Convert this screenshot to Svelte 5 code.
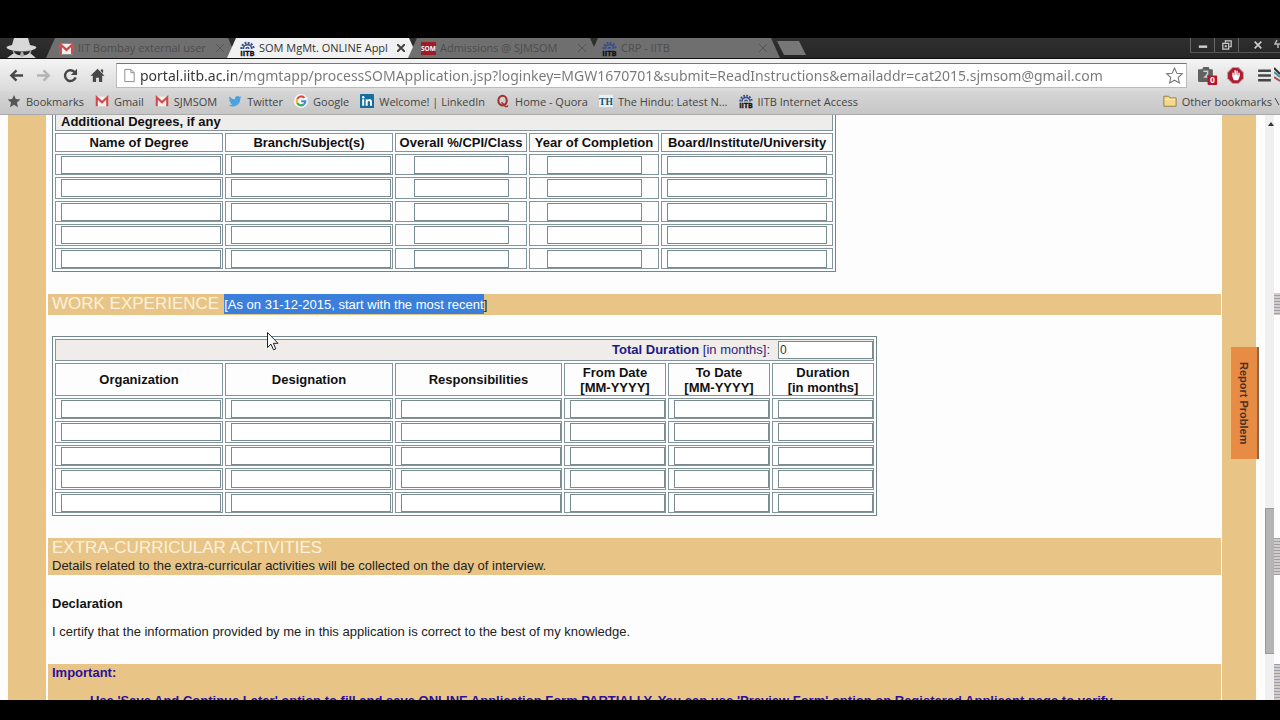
<script lang="ts">
  const tabs = [
    { title: 'IIT Bombay external user', icon: 'gmail', active: false },
    { title: 'SOM MgMt. ONLINE Appl', icon: 'iitb', active: true },
    { title: 'Admissions @ SJMSOM', icon: 'som', active: false },
    { title: 'CRP - IITB', icon: 'iitb', active: false },
  ];

  const bookmarks = [
    { label: 'Bookmarks', icon: 'star' },
    { label: 'Gmail', icon: 'gmail' },
    { label: 'SJMSOM', icon: 'gmail' },
    { label: 'Twitter', icon: 'twitter' },
    { label: 'Google', icon: 'google' },
    { label: 'Welcome! | LinkedIn', icon: 'linkedin' },
    { label: 'Home - Quora', icon: 'quora' },
    { label: 'The Hindu: Latest N...', icon: 'hindu' },
    { label: 'IITB Internet Access', icon: 'iitb' },
  ];

  const degreeCols = ['Name of Degree', 'Branch/Subject(s)', 'Overall %/CPI/Class', 'Year of Completion', 'Board/Institute/University'];
  const workCols = [
    ['Organization'],
    ['Designation'],
    ['Responsibilities'],
    ['From Date', '[MM-YYYY]'],
    ['To Date', '[MM-YYYY]'],
    ['Duration', '[in months]'],
  ];
  const rows = [1, 2, 3, 4, 5];

  let url = $state('portal.iitb.ac.in/mgmtapp/processSOMApplication.jsp?loginkey=MGW1670701&submit=ReadInstructions&emailaddr=cat2015.sjmsom@gmail.com');
  let total = $state('0');
</script>

{#snippet icon(name: string)}
  <svg class="icon" viewBox="0 0 16 16" aria-hidden="true">
    {#if name === 'gmail'}
      <path d="M1 3h14v11H1z" fill="#f3eeee" />
      <path d="M2 14V4l6 5.500 6-5.500v10" fill="none" stroke="#cf4b4b" stroke-width="2.400" />
    {:else if name === 'iitb'}
      <path d="M3.500 8.500a4.500 4.500 0 0 1 9 0" fill="none" stroke="#35508f" stroke-width="1.800" />
      <path d="M1.500 8.500a6.500 6.500 0 0 1 13 0" fill="none" stroke="#35508f" stroke-width="2.400" stroke-dasharray="2 1.400" />
      <path d="M6.500 8.500a1.500 1.500 0 0 1 3 0" fill="none" stroke="#35508f" stroke-width="1.500" />
      <text x="8" y="16" text-anchor="middle" font-size="8" font-weight="bold" fill="#111" stroke="#111" stroke-width=".4">IITB</text>
    {:else if name === 'som'}
      <path d="M0 1h16v14H0z" fill="#9c1c28" />
      <text x="8" y="11" text-anchor="middle" font-size="7" font-weight="bold" fill="#fff">SOM</text>
    {:else if name === 'star'}
      <path d="M8 1l2.100 4.800 5.200.5-3.900 3.500 1.100 5.200L8 12.300 3.500 15l1.100-5.200L.7 6.300l5.200-.5z" fill="#555" />
    {:else if name === 'twitter'}
      <path d="M15.500 3.700c-.6.300-1.100.4-1.700.5.600-.4 1-1 1.200-1.700-.6.300-1.200.6-1.900.7a3 3 0 0 0-5.100 2.700A8.500 8.500 0 0 1 1.600 2.800a3 3 0 0 0 1 4c-.5 0-1-.2-1.400-.4 0 1.500 1 2.700 2.400 3-.4.100-.9.100-1.300 0 .4 1.200 1.500 2.100 2.800 2.100A6 6 0 0 1 .7 12.800 8.500 8.500 0 0 0 14 5.200c.6-.4 1.100-.9 1.500-1.500z" fill="#4ba3dd" />
    {:else if name === 'google'}
      <circle cx="8" cy="8" r="8" fill="#f8f8f8" />
      <g fill="none" stroke-width="2.400">
        <path d="M12 4.500A5 5 0 0 0 3.700 5.600" stroke="#dc4a3d" />
        <path d="M3.700 5.600a5 5 0 0 0 0 4.800" stroke="#edb72a" />
        <path d="M3.700 10.400a5 5 0 0 0 7.500 1.500" stroke="#3aa757" />
        <path d="M11.200 11.900A5 5 0 0 0 13 8.200H8.200" stroke="#4484e4" />
      </g>
    {:else if name === 'linkedin'}
      <rect width="16" height="16" rx="1" fill="#176d9c" />
      <path d="M2.500 6h2.300v7.500H2.500zM6.500 6h2.200v1c1.500-2 5-1.500 5 2v4.500h-2.300V9.500c0-2.300-2.600-2-2.600 0v4H6.500z" fill="#fff" />
      <circle cx="3.700" cy="3.700" r="1.400" fill="#fff" />
    {:else if name === 'quora'}
      <ellipse cx="7.500" cy="7.500" rx="4.800" ry="5.500" fill="none" stroke="#a5332d" stroke-width="2.400" />
      <path d="M6 10c2.500-.5 3 4.500 5.500 4.500 1.300 0 1.800-.7 2-1.500" fill="none" stroke="#a5332d" stroke-width="1.800" />
    {:else if name === 'hindu'}
      <path d="M0 1h16v14H0z" fill="#e8f0f4" />
      <text class="serif" x="8" y="12" text-anchor="middle" font-size="11" font-weight="bold" fill="#175070">TH</text>
    {:else if name === 'folder'}
      <path d="M1 14V2.500h5.500L8 4.500h7V14z" fill="#f2d98b" stroke="#8d7638" />
      <path d="M2 6h12" stroke="#fff2bd" />
    {:else if name === 'back' || name === 'forward'}
      <path
        d="M15 8H3M8 2.500L2.500 8 8 13.500"
        fill="none"
        stroke={name === 'back' ? '#484848' : '#b4b4b4'}
        stroke-width="2.600"
        transform={name === 'back' ? undefined : 'rotate(180 8 8)'}
      />
    {:else if name === 'reload'}
      <path d="M12.600 4.600A5.800 5.800 0 1 0 13.500 10" fill="none" stroke="#484848" stroke-width="2.600" />
      <path d="M15 .8v6.700H8.300z" fill="#484848" />
    {:else if name === 'home'}
      <path d="M8 .8l7.500 7.400H13V15H9.500v-4.500h-3V15H3V8.200H.5zM11.500 1.500H14v4l-2.500-2.400z" fill="#484848" />
    {:else if name === 'page'}
      <path d="M3 1.500h6.500L13 5v9.500H3zM9.500 1.500V5H13" fill="#fff" stroke="#888" />
    {:else if name === 'favourite'}
      <path d="M8 .9l2.200 4.900 5.200.5-3.900 3.600 1.100 5.200L8 12.400l-4.600 2.700 1.100-5.200L.6 6.300l5.200-.5z" fill="#fff" stroke="#777" />
    {:else if name === 'counter'}
      <path d="M0 3q0-1 1-1h3l1-2h5l1 2h2q1 0 1 1v10q0 1-1 1H1q-1 0-1-1z" fill="#5f625f" />
      <path d="M5 4h4v2.500L6.500 9.500H9" fill="none" stroke="#ccc" stroke-width="1.400" />
      <rect x="9" y="8" width="9" height="9" rx="1" fill="#b3182a" />
      <text x="13.500" y="15.500" text-anchor="middle" font-size="8" font-weight="bold" fill="#fff">0</text>
    {:else if name === 'blocker'}
      <path d="M5 0h6l5 5v6l-5 5H5l-5-5V5z" fill="#aaa" />
      <path d="M5.400 1h5.200L15 5.400v5.200L10.600 15H5.400L1 10.600V5.400z" fill="#ad1c2f" />
      <path d="M5 5.500V9l1.500 3.500h4L12 8.500V5.500h-1.300V8H10V3.500H8.800V7h-.5V3H7v4.500h-.6v-2z" fill="#fff" />
    {:else if name === 'menu'}
      <path d="M2 3.500h12M2 8h12M2 12.500h12" stroke="#444" stroke-width="2.400" />
    {/if}
  </svg>
{/snippet}

<div class="screen">
  <header class="browser">
    <div class="tab-strip">
      <svg class="incognito" viewBox="0 0 45 20" aria-hidden="true">
        <path d="M14 0h14l2 7c6 1 8 2 5 4-6 3-21 3-27 0-3-2-1-3 4-4z" fill="#d8d8d8" />
        <path d="M12 12c5 2 14 2 20 0l-3 6-7 2-7-2z" fill="#aaa" />
        <path d="M14 13l7 1-1 3h-4zM30 13l-7 1 1 3h4z" fill="#292929" />
        <path d="M7 20l7-5 8 4 8-4 6 5z" fill="#d5d5d5" />
      </svg>
      <nav class="tabs">
        {#each tabs as tab}
          <button class="tab" class:active={tab.active}>
            {@render icon(tab.icon)}
            <span class="tab-title">{tab.title}</span>
            <svg class="close" viewBox="0 0 8 8" aria-hidden="true"><path d="M0 0l8 8M8 0L0 8" /></svg>
          </button>
        {/each}
      </nav>
      <button class="new-tab" aria-label="New tab"></button>
      <div class="window-controls">
        <button aria-label="Minimize"><svg viewBox="0 0 12 12"><path d="M1 8h10" stroke-width="3" /></svg></button>
        <button aria-label="Restore"><svg viewBox="0 0 12 12"><path d="M4 3V1h7v7H9M1 4h7v7H1zM4 7h1v1H4z" /></svg></button>
        <button class="shut" aria-label="Close"><svg viewBox="0 0 12 12"><path d="M2 2l8 8M10 2l-8 8" stroke-width="2" /></svg></button>
      </div>
    </div>

    <div class="toolbar">
      <button aria-label="Back">{@render icon('back')}</button>
      <button aria-label="Forward">{@render icon('forward')}</button>
      <button aria-label="Reload">{@render icon('reload')}</button>
      <button aria-label="Home">{@render icon('home')}</button>
      <div class="omnibox">
        {@render icon('page')}
        <input class="url" aria-label="Address" bind:value={url} />
        <button class="fav" aria-label="Bookmark this page">{@render icon('favourite')}</button>
      </div>
      <button class="ext" aria-label="Page counter">{@render icon('counter')}</button>
      <button class="ext" aria-label="Ad blocker">{@render icon('blocker')}</button>
      <button class="ext" aria-label="Menu">{@render icon('menu')}</button>
    </div>

    <nav class="bookmarks">
      {#each bookmarks as mark}
        <a href="#top">{@render icon(mark.icon)}{mark.label}</a>
      {/each}
      <a class="other" href="#top">{@render icon('folder')}Other bookmarks</a>
    </nav>

    <svg class="sliver" viewBox="0 0 6 76" aria-hidden="true">
      <path d="M3 2L1 6h5M4 6v4" fill="none" stroke="#bbb" stroke-width="1.500" />
      <path d="M0 30l6 6" stroke="#333" stroke-width="2" />
      <path d="M0 34l6 5" stroke="#3b8fa0" stroke-width="2" />
      <path d="M0 39l6 4" stroke="#b04a50" stroke-width="2" />
      <path d="M1 60l4 7" stroke="#444" />
    </svg>
  </header>

  <div class="viewport">
    <main class="page">
      <form class="form">
        <table class="grid degrees">
          <colgroup><col class="wide" /><col class="wide" /><col class="score" /><col class="year" /><col class="board" /></colgroup>
          <thead>
            <tr><th class="caption" colspan="5">Additional Degrees, if any</th></tr>
            <tr>
              {#each degreeCols as col}<th>{col}</th>{/each}
            </tr>
          </thead>
          <tbody>
            {#each rows as row}
              <tr>
                {#each degreeCols as col, i}
                  <td class:centered={i > 1}><input class:short={i === 2 || i === 3} aria-label="{col} {row}" /></td>
                {/each}
              </tr>
            {/each}
          </tbody>
        </table>

        <section class="bar work-bar">
          <h2>WORK EXPERIENCE</h2>
          <span><mark>[As on 31-12-2015, start with the most recent</mark>]</span>
        </section>

        <table class="grid work">
          <colgroup><col class="wide" /><col class="wide" /><col class="duty" /><col class="date" /><col class="date" /><col class="date" /></colgroup>
          <thead>
            <tr class="total">
              <td colspan="6">
                <div>
                  <label for="total"><b>Total Duration</b> [in months]:</label>
                  <input id="total" class="short" bind:value={total} />
                </div>
              </td>
            </tr>
            <tr class="heads">
              {#each workCols as lines}
                <th>{#each lines as line}<div>{line}</div>{/each}</th>
              {/each}
            </tr>
          </thead>
          <tbody>
            {#each rows as row}
              <tr>
                {#each workCols as lines, i}
                  <td><input class:short={i > 2} aria-label="{lines[0]} {row}" /></td>
                {/each}
              </tr>
            {/each}
          </tbody>
        </table>

        <section class="bar">
          <h2>EXTRA-CURRICULAR ACTIVITIES</h2>
          <p>Details related to the extra-curricular activities will be collected on the day of interview.</p>
        </section>

        <section class="declaration">
          <h3>Declaration</h3>
          <p>I certify that the information provided by me in this application is correct to the best of my knowledge.</p>
        </section>

        <section class="bar important">
          <h3>Important:</h3>
          <ul>
            <li>Use 'Save And Continue Later' option to fill and save ONLINE Application Form PARTIALLY. You can use 'Preview Form' option on Registered Applicant page to verify</li>
          </ul>
        </section>
      </form>
    </main>

    <div class="scrollbar" aria-hidden="true">
      <span class="arrow"></span>
      <span class="track-top"></span>
      <span class="thumb"></span>
      <span class="track-bottom"></span>
    </div>
    <div class="edge"></div>

    <button class="report">Report Problem</button>

    <svg class="pointer" viewBox="0 0 12 19" aria-hidden="true">
      <path d="M.5.500v15l3.500-3.300 2.500 5.600 2.300-1-2.500-5.500h4.700z" fill="#fff" stroke="#222" />
    </svg>
  </div>
</div>

<style>
  :global(body) { margin: 0; background: #000; }

  .screen {
    box-sizing: border-box; height: 100vh; padding: 38px 0 20px;
    display: flex; flex-direction: column; overflow: hidden;
    background: #000; font-family: "Liberation Sans", Arial, sans-serif; font-size: 13px;
  }
  button { border: 0; padding: 0; background: none; font: inherit; }
  h2, h3, p, ul { margin: 0; padding: 0; }
  .icon { width: 15px; height: 15px; flex: none; overflow: visible; }
  .serif { font-family: "Liberation Serif", serif; }

  /* browser frame */
  .browser { position: relative; flex: none; font-family: "Open Sans", "Noto Sans", sans-serif; }
  .sliver { position: absolute; right: 0; top: 0; width: 6px; height: 76px; }
  .tab-strip { display: flex; height: 20px; background: linear-gradient(#303030, #262626); border-bottom: 1px solid #111; }
  .incognito { width: 45px; height: 20px; flex: none; }
  .tabs { display: flex; padding-left: 1px; }
  .tab {
    display: flex; align-items: center; gap: 4px; width: 191px; margin-right: -10px; padding: 0 13px;
    background: #6f6f6f; color: #4d4d4d; font-size: 11px; line-height: 20px;
    clip-path: polygon(0 100%, 9px 0, 182px 0, 100% 100%);
  }
  .tab.active { background: #f1f1f1; color: #333; }
  .tab-title { flex: 1; text-align: left; white-space: nowrap; }
  .close { width: 8px; height: 8px; flex: none; fill: none; stroke: #555; stroke-width: 1; }
  .active .close { stroke: #444; stroke-width: 2; }
  .new-tab {
    width: 29px; height: 14px; margin: 3px 0 0 7px; background: #777;
    clip-path: polygon(0 0, 22px 0, 100% 100%, 7px 100%);
  }
  .window-controls { display: flex; height: 14px; margin-left: auto; border-bottom: 1px solid #555; }
  .window-controls button { width: 24px; border-left: 1px solid #666; line-height: 0; }
  .window-controls svg { width: 10px; height: 10px; fill: none; stroke: #ccc; stroke-width: 1.5; }
  .window-controls .shut { width: 42px; padding-right: 4px; }

  .toolbar { display: flex; align-items: center; height: 32px; padding: 0 1px 0 3px; background: linear-gradient(#f4f4f4, #dadada); }
  .toolbar button { display: flex; justify-content: center; width: 27px; flex: none; }
  .toolbar .ext { width: 29px; }
  .ext .icon { width: 17px; height: 17px; }
  .omnibox {
    display: flex; align-items: center; flex: 1; box-sizing: border-box; height: 25px; margin: 0 5px;
    padding-left: 5px; background: #fff; border: 1px solid #bbb; border-top-color: #777;
  }
  .url {
    flex: 1; min-width: 0; height: 22px; border: 0; padding: 0; margin-left: 3px; outline: 0;
    font: 14px "Noto Sans", "Open Sans", sans-serif; color: transparent;
    background: linear-gradient(90deg, #333 96px, #777 96px); background-clip: text;
  }
  .toolbar .fav { width: 24px; }
  .fav .icon { width: 17px; height: 17px; }

  .bookmarks {
    display: flex; align-items: center; gap: 11px; height: 20px; padding: 0 8px 3px 7px;
    background: linear-gradient(#d6d6d6, #c6c6c6); border-bottom: 1px solid #aaa; font-size: 11px;
  }
  .bookmarks a { display: flex; align-items: center; gap: 5px; color: #444; text-decoration: none; white-space: nowrap; }
  .bookmarks .icon { width: 14px; height: 14px; }
  .bookmarks .other { margin-left: auto; }

  /* page */
  .viewport { position: relative; flex: 1; min-height: 0; display: flex; overflow: hidden; background: #fdfdfe; }
  .page {
    flex: 1; min-width: 0; margin: 0 9px 0 8px; box-sizing: border-box; padding: 0 1px 0 2px;
    border: solid #e8c586; border-width: 0 34px 0 38px; background: #fdfdfe;
  }
  .form { margin-top: -6px; color: #222; line-height: 18px; }
  .grid {
    table-layout: fixed; margin-left: 4px; border: 1px solid #71858a;
    border-collapse: separate; border-spacing: 2px; line-height: 15px;
  }
  .degrees { width: 784px; }
  .work { width: 825px; }
  .wide { width: 168px; }
  .score { width: 132px; }
  .year { width: 130px; }
  .board { width: 172px; }
  .duty { width: 167px; }
  .date { width: 102px; }
  th, td { box-sizing: border-box; border: 1px solid #82959a; padding: 0; white-space: nowrap; }
  th { height: 19px; color: #111; text-align: center; }
  td { height: 21px; padding-left: 5px; line-height: 0; }
  td.centered { padding: 0; text-align: center; }
  tbody tr:nth-child(even) td { height: 22px; }
  .caption { padding-left: 5px; background: #efedeb; text-align: left; }
  .grid input {
    box-sizing: border-box; width: 160px; height: 18px; padding: 0 1px; margin: 0;
    border: 1px solid #798b90; background: #fff; font: 12px "Liberation Sans", Arial, sans-serif; color: #333;
  }
  .grid input.short { width: 95px; }
  .total td { height: 22px; background: #efecea; }
  .total div { display: flex; justify-content: flex-end; align-items: center; gap: 8px; line-height: 18px; }
  .total label { color: #2c2480; }
  .total b { color: #201a86; }
  .heads th { height: 33px; }

  .bar { margin-top: 22px; padding-left: 4px; background: #e8c586; }
  .bar h2 { font-size: 17px; font-weight: 400; line-height: 19px; color: #fbf1dc; }
  .work-bar { display: flex; gap: 5px; height: 21px; margin-bottom: 21px; }
  .work-bar span { line-height: 21px; }
  mark { display: inline-block; height: 20px; background: #3b7fdc; color: #fff; }
  .declaration { padding: 20px 0 1px 4px; }
  h3 { margin-bottom: 10px; font-size: 13px; line-height: 18px; color: #111; }
  .important { height: 60px; }
  .important h3 { color: #2c109c; }
  .important ul { padding-left: 38px; list-style: none; font-weight: 700; color: #2c109c; white-space: nowrap; }

  .scrollbar { display: flex; flex-direction: column; width: 9px; background: #f0f0f1; }
  .arrow { margin: 7px 2px 0 3px; border: solid transparent; border-width: 0 3px 4px; border-bottom-color: #333; }
  .track-top { flex: 383; }
  .thumb { flex: 145; background: #b4b4b4; border: 1px solid #999; border-right: 0; }
  .track-bottom { flex: 46; }
  .edge {
    width: 6px;
    background:
      linear-gradient(#fdfdfe 178px, transparent 178px 200px, #fdfdfe 200px 423px, transparent 423px 460px, #fdfdfe 460px 549px, transparent 549px),
      repeating-linear-gradient(#9ba0ad 0 1px, #d2cbc8 1px 3px);
  }
  .report {
    position: absolute; right: 21px; top: 232px; width: 28px; height: 112px; box-sizing: border-box;
    background: #e88b45; border-right: 2px solid #8f6548; color: #4a3122;
    font-size: 11px; font-weight: 700; writing-mode: vertical-rl; text-align: center;
  }
  .pointer { position: absolute; left: 267px; top: 217px; width: 12px; height: 19px; }
</style>
